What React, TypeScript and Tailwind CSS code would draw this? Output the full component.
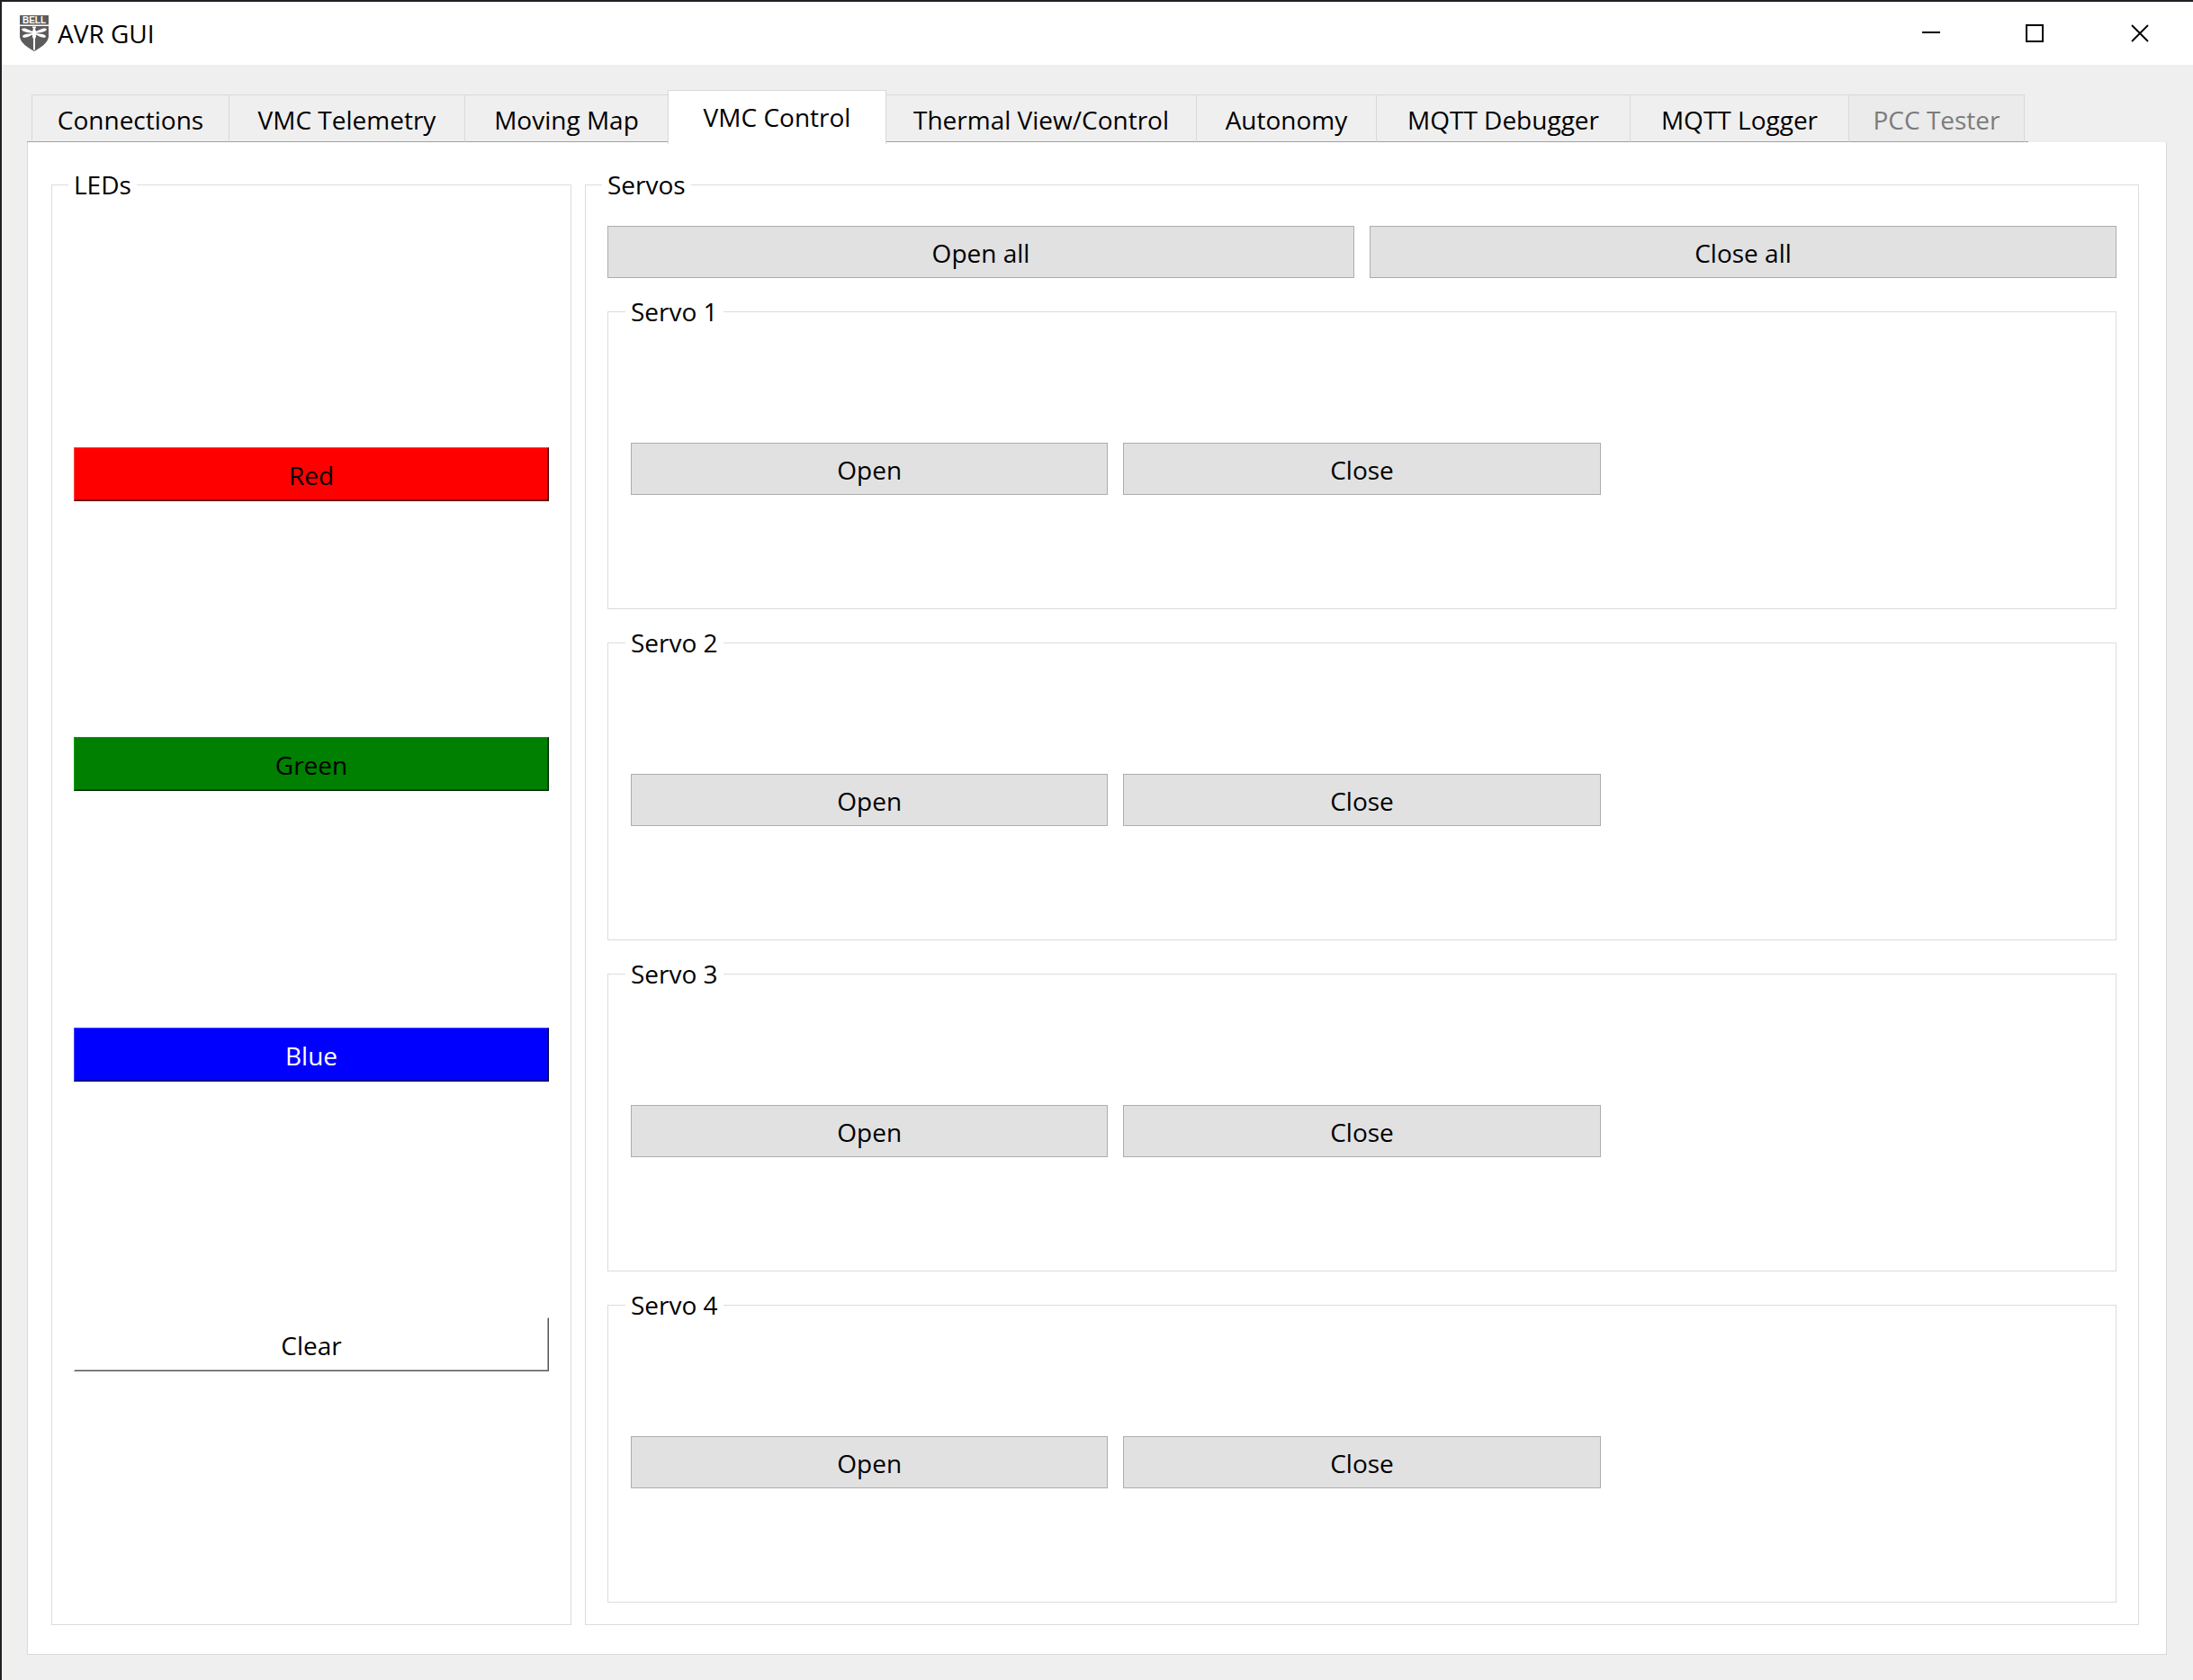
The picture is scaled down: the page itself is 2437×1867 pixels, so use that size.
import React from "react";

const tabs = [
  { name: "Connections", width: "w-[219px]" },
  { name: "VMC Telemetry", width: "w-[262px]" },
  { name: "Moving Map", width: "w-[226px]" },
  { name: "VMC Control", width: "w-[243px]", selected: true },
  { name: "Thermal View/Control", width: "w-[344px]" },
  { name: "Autonomy", width: "w-[200px]" },
  { name: "MQTT Debugger", width: "w-[282px]" },
  { name: "MQTT Logger", width: "w-[243px]" },
  { name: "PCC Tester", width: "w-[196px]", disabled: true },
];

const leds = [
  { name: "Red", style: "bg-[#ff0000] text-black border-t-[#ff4040] border-l-[#ff4040] border-r-[#500000] border-b-[#500000] shadow-[inset_-1px_-1px_0_#a80000]" },
  { name: "Green", style: "bg-[#008000] text-black border-t-[#00a000] border-l-[#00a000] border-r-[#002800] border-b-[#002800] shadow-[inset_-1px_-1px_0_#005500]" },
  { name: "Blue", style: "bg-[#0000ff] text-white border-t-[#4040ff] border-l-[#4040ff] border-r-[#000050] border-b-[#000050] shadow-[inset_-1px_-1px_0_#0000a8]" },
  { name: "Clear", style: "bg-white text-black border-t-white border-l-white border-r-[#555555] border-b-[#555555] shadow-[inset_-1px_-1px_0_#a8a8a8]" },
];

const servos = ["Servo 1", "Servo 2", "Servo 3", "Servo 4"];

function BellLogo() {
  return (
    <svg viewBox="0 0 32 40" className="h-10 w-8" aria-hidden="true">
      <path d="M0 0H32V10.5H0ZM0 12H32V24C31 31 23 36 16 40C9 36 1 31 0 24Z" fill="#5c5c5c" />
      <text x="16" y="9" textAnchor="middle" fontFamily="Liberation Sans, sans-serif" fontSize="10" fontWeight="700" fill="#fff">BELL</text>
      <path d="M2 15.5C3 14 6 14.500 9 15.700L15 18.300V20L10 19.300C6 18.600 2.500 17.500 2 15.500ZM30 15.500C29 14 26 14.500 23 15.700L17 18.300V20L22 19.300C26 18.600 29.500 17.500 30 15.500ZM3 23.500C3.500 21.500 7 20.800 10 20.500L15 20V21.200L9 24C6 25.200 3.500 25 3 23.500ZM29 23.500C28.500 21.500 25 20.800 22 20.500L17 20V21.200L23 24C26 25.200 28.500 25 29 23.500Z" fill="#fff" />
      <path d="M14 12.500H18V14H17.200V16L18 17.500V24L17 26V38.500H15V26L14 24V17.500L14.800 16V14H14Z" fill="#fff" />
    </svg>
  );
}

function PushButton({ children }: { children: React.ReactNode }) {
  return (
    <button type="button" className="h-[58px] w-full border border-[#adadad] bg-[#e1e1e1] pt-0.5 text-center">
      {children}
    </button>
  );
}

function Group({ title, className, children }: { title: string; className: string; children: React.ReactNode }) {
  return (
    <fieldset className={`min-w-0 border border-[#dcdcdc] ${className}`}>
      <legend className="-ml-1.5 px-1.5 leading-[38px]">{title}</legend>
      {children}
    </fieldset>
  );
}

export default function App() {
  return (
    <div className="flex min-h-screen flex-col border-t-2 border-l-2 border-[#231f26] bg-[#efefef] font-['Open_Sans',sans-serif] text-[28px] leading-[38px] text-black">
      <header className="flex h-[70px] items-center bg-white">
        <div className="flex flex-1 items-center gap-2.5 pl-5">
          <BellLogo />
          <h1>AVR GUI</h1>
        </div>
        <button type="button" aria-label="Minimize" className="flex h-full w-[115px] items-center justify-center">
          <svg viewBox="0 0 20 20" className="size-5" shapeRendering="crispEdges"><path d="M0 9H20" stroke="#000" strokeWidth="2" /></svg>
        </button>
        <button type="button" aria-label="Maximize" className="flex h-full w-[116px] items-center justify-center">
          <svg viewBox="0 0 20 20" className="size-5"><path d="M1 1H19V19H1Z" fill="none" stroke="#000" strokeWidth="2" /></svg>
        </button>
        <button type="button" aria-label="Close" className="flex h-full w-[118px] items-center justify-center">
          <svg viewBox="0 0 20 20" className="size-5"><path d="M1 1L19 19M19 1L1 19" stroke="#000" strokeWidth="1.8" /></svg>
        </button>
      </header>

      <main className="flex flex-1 flex-col pt-7 pr-[29px] pb-7 pl-7">
        <nav role="tablist" className="flex items-end self-start">
          <div className="w-[5px] self-end border-b border-[#a0a0a0]" />
          {tabs.map((tab, i) =>
            tab.selected ? (
              <button key={tab.name} type="button" role="tab" aria-selected="true" className={`z-10 -mb-0.5 h-[60px] border border-b-0 border-[#d9d9d9] bg-white pb-0.5 whitespace-nowrap ${tab.width}`}>
                {tab.name}
              </button>
            ) : (
              <button
                key={tab.name}
                type="button"
                role="tab"
                aria-selected="false"
                disabled={tab.disabled}
                className={`h-[53px] border-t border-b border-t-[#d9d9d9] border-b-[#a0a0a0] pt-0.5 whitespace-nowrap disabled:bg-[#ebebeb] disabled:text-[#7b7b7b] ${tab.width} ${i === 4 ? "" : "border-l border-l-[#d9d9d9]"} ${tab.disabled ? "border-r border-r-[#d9d9d9]" : ""}`}
              >
                {tab.name}
              </button>
            ),
          )}
          <div className="w-[4px] self-end border-b border-[#a0a0a0]" />
        </nav>

        <section role="tabpanel" className="grid flex-1 grid-cols-[578fr_1727fr] gap-[15px] border border-t-0 border-[#d9d9d9] bg-white pt-7 pr-[30px] pb-8 pl-[26px]">
          <Group title="LEDs" className="flex flex-col justify-evenly px-6 pt-2.5 pb-[18px]">
            {leds.map((led) => (
              <button key={led.name} type="button" className={`h-[60px] w-full border pt-0.5 ${led.style}`}>
                {led.name}
              </button>
            ))}
          </Group>

          <Group title="Servos" className="flex flex-col gap-[18px] px-6 pt-[27px] pb-6">
            <div className="grid grid-cols-2 gap-[17px]">
              <PushButton>Open all</PushButton>
              <PushButton>Close all</PushButton>
            </div>
            {servos.map((servo) => (
              <Group key={servo} title={servo} className="grid flex-1 grid-cols-3 items-center gap-[17px] px-[25px]">
                <PushButton>Open</PushButton>
                <PushButton>Close</PushButton>
              </Group>
            ))}
          </Group>
        </section>
      </main>
    </div>
  );
}
